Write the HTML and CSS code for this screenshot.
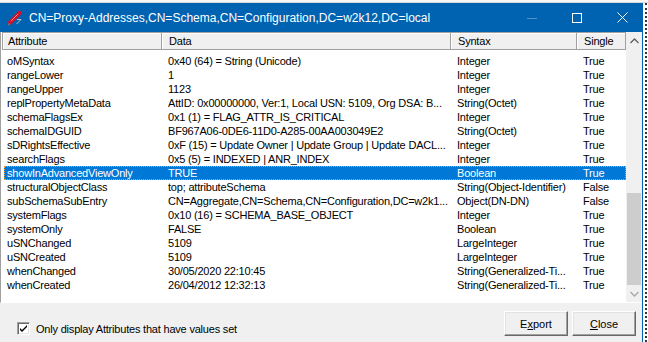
FILE: index.html
```html
<!DOCTYPE html>
<html lang="en">
<head>
  <meta charset="UTF-8">
  <title>Proxy-Addresses</title>
  <link rel="stylesheet" href="styles.css">
</head>
<body>
  <div class="bg-top"></div>
  <div class="screen">
    <div class="window">
      <!-- Title bar -->
      <div class="titlebar">
        <svg class="app-icon" width="16" height="16" viewBox="0 0 16 16">
          <path d="M3 12.5 L12.5 3" stroke="#d0142c" stroke-width="4.2" stroke-linecap="round"/>
          <path d="M4 11 L11 4" stroke="#ff8a8a" stroke-width="1"/>
          <path d="M1 15 L3 13.5" stroke="#777" stroke-width="1.4"/>
          <path d="M10 9.5 L14 9.5 L9.5 14" fill="none" stroke="#c0c0c0" stroke-width="1"/>
        </svg>
        <span class="title">CN=Proxy-Addresses,CN=Schema,CN=Configuration,DC=w2k12,DC=local</span>
        <div class="caption">
          <svg class="cap-icon" width="10" height="10" viewBox="0 0 10 10"><path d="M0 5.5 H10" stroke="#5a93cc" stroke-width="1"/></svg>
          <svg class="cap-icon" width="10" height="10" viewBox="0 0 10 10"><rect x="0.5" y="0.5" width="9" height="9" fill="none" stroke="#fff" stroke-width="1"/></svg>
          <svg class="cap-icon" width="11" height="11" viewBox="0 0 11 11"><path d="M0.5 0.5 L10.5 10.5 M10.5 0.5 L0.5 10.5" stroke="#fff" stroke-width="1"/></svg>
        </div>
      </div>

      <!-- Attribute list -->
      <div class="list">
        <div class="list-main">
          <div class="list-head">
            <div class="hcell first">Attribute</div>
            <div class="hcell">Data</div>
            <div class="hcell">Syntax</div>
            <div class="hcell">Single</div>
          </div>
          <div class="rows">
            <div class="row"><span>oMSyntax</span><span>0x40 (64) = String (Unicode)</span><span>Integer</span><span>True</span></div>
            <div class="row"><span>rangeLower</span><span>1</span><span>Integer</span><span>True</span></div>
            <div class="row"><span>rangeUpper</span><span>1123</span><span>Integer</span><span>True</span></div>
            <div class="row"><span>replPropertyMetaData</span><span>AttID: 0x00000000, Ver:1, Local USN: 5109, Org DSA: B...</span><span>String(Octet)</span><span>True</span></div>
            <div class="row"><span>schemaFlagsEx</span><span>0x1 (1) = FLAG_ATTR_IS_CRITICAL</span><span>Integer</span><span>True</span></div>
            <div class="row"><span>schemaIDGUID</span><span>BF967A06-0DE6-11D0-A285-00AA003049E2</span><span>String(Octet)</span><span>True</span></div>
            <div class="row"><span>sDRightsEffective</span><span>0xF (15) = Update Owner | Update Group | Update DACL...</span><span>Integer</span><span>True</span></div>
            <div class="row"><span>searchFlags</span><span>0x5 (5) = INDEXED | ANR_INDEX</span><span>Integer</span><span>True</span></div>
            <div class="row selected"><span>showInAdvancedViewOnly</span><span>TRUE</span><span>Boolean</span><span>True</span></div>
            <div class="row"><span>structuralObjectClass</span><span>top; attributeSchema</span><span>String(Object-Identifier)</span><span>False</span></div>
            <div class="row"><span>subSchemaSubEntry</span><span>CN=Aggregate,CN=Schema,CN=Configuration,DC=w2k1...</span><span>Object(DN-DN)</span><span>False</span></div>
            <div class="row"><span>systemFlags</span><span>0x10 (16) = SCHEMA_BASE_OBJECT</span><span>Integer</span><span>True</span></div>
            <div class="row"><span>systemOnly</span><span>FALSE</span><span>Boolean</span><span>True</span></div>
            <div class="row"><span>uSNChanged</span><span>5109</span><span>LargeInteger</span><span>True</span></div>
            <div class="row"><span>uSNCreated</span><span>5109</span><span>LargeInteger</span><span>True</span></div>
            <div class="row"><span>whenChanged</span><span>30/05/2020 22:10:45</span><span>String(Generalized-Ti...</span><span>True</span></div>
            <div class="row"><span>whenCreated</span><span>26/04/2012 12:32:13</span><span>String(Generalized-Ti...</span><span>True</span></div>
          </div>
        </div>
        <div class="vscroll">
          <div class="arrow">
            <svg width="9" height="6" viewBox="0 0 9 6"><path d="M0.5 5 L4.5 1 L8.5 5" fill="none" stroke="#606060" stroke-width="1.3"/></svg>
          </div>
          <div class="track"><div class="thumb"></div></div>
          <div class="arrow">
            <svg width="9" height="6" viewBox="0 0 9 6"><path d="M0.5 1 L4.5 5 L8.5 1" fill="none" stroke="#a8a8a8" stroke-width="1.3"/></svg>
          </div>
        </div>
      </div>

      <!-- Bottom bar -->
      <div class="footer">
        <label class="check">
          <span class="box">
            <svg width="7" height="7" viewBox="0 0 7 7"><path d="M0 3 L0 5 L2 7 L7 2 L7 0 L2 5 Z" fill="#000"/></svg>
          </span>
          Only display Attributes that have values set
        </label>
        <div class="buttons">
          <button class="btn">E<u>x</u>port</button>
          <button class="btn"><u>C</u>lose</button>
        </div>
      </div>
    </div>
    <div class="edge"></div>
  </div>
</body>
</html>
```

FILE: styles.css
```css
/* Reset */
* {
  margin: 0;
  padding: 0;
  box-sizing: border-box;
}

body {
  width: 648px;
  height: 342px;
  overflow: hidden;
  background: #fff;
  font-family: "Liberation Sans", Arial, sans-serif;
  font-size: 11px;
  letter-spacing: -0.2px;
  color: #000;
}

/* Strip of the window behind */
.bg-top {
  height: 3px;
  background: #f7f7f7;
  border-bottom: 1px solid #d8d8d8;
}

.screen {
  display: flex;
  height: 339px;
}

.window {
  width: 643px;
  display: flex;
  flex-direction: column;
  background: #f0f0f0;
  border-right: 1px solid #0063b1;
}

.edge {
  flex: 1;
  border-right: 2px dotted #333;
  margin-right: 1px;
}

/* Title bar */
.titlebar {
  height: 29px;
  background: #0063b1;
  display: flex;
  align-items: center;
  color: #fff;
  padding-left: 7px;
}

.app-icon {
  margin-right: 6px;
}

.title {
  font-size: 12px;
  letter-spacing: 0;
}

.caption {
  margin-left: auto;
  display: flex;
  align-items: center;
  gap: 35px;
  padding-right: 14px;
}

/* List view */
.list {
  height: 271px;
  display: flex;
  background: #fff;
  border-left: 1px solid #a0a0a0;
  border-bottom: 1px solid #fff;
}

.list-main {
  width: 625px;
  padding-left: 1px;
}

.list-head {
  display: grid;
  grid-template-columns: 160px 289px 126px 49px;
  height: 18px;
}

.hcell {
  border: 1px solid #a0a0a0;
  border-left: none;
  box-shadow: inset 1px 1px #fff;
  background: #f0f0f0;
  padding-left: 7px;
  line-height: 16px;
}

.hcell.first {
  border-left: 1px solid #a0a0a0;
  padding-left: 5px;
}

.rows {
  padding-top: 4px;
  padding-left: 2px;
}

.row {
  display: grid;
  grid-template-columns: 158px 289px 126px 49px;
  height: 14px;
  line-height: 14px;
  white-space: nowrap;
}

.row span {
  padding-left: 6px;
  overflow: hidden;
}

.row span:first-child {
  padding-left: 3px;
}

.row.selected {
  background: #0078d7;
  color: #fff;
  outline: 1px dotted #f39a3a;
  outline-offset: -1px;
}

/* Vertical scrollbar */
.vscroll {
  width: 17px;
  background: #f0f0f0;
  display: flex;
  flex-direction: column;
}

.arrow {
  height: 17px;
  display: flex;
  align-items: center;
  justify-content: center;
}

.track {
  flex: 1;
  position: relative;
}

.thumb {
  position: absolute;
  left: 1px;
  right: 1px;
  top: 144px;
  bottom: 0;
  background: #cdcdcd;
}

/* Footer */
.footer {
  flex: 1;
  display: flex;
  align-items: flex-start;
  padding: 0 6px 0 17px;
}

.check {
  margin-top: 19px;
  display: flex;
  align-items: center;
  gap: 6px;
}

.box {
  width: 13px;
  height: 13px;
  background: #fff;
  border: 1px solid;
  border-color: #a0a0a0 #fff #fff #a0a0a0;
  box-shadow: inset 1px 1px #696969, inset -1px -1px #e3e3e3;
  display: flex;
  align-items: center;
  justify-content: center;
}

.buttons {
  margin-left: auto;
  margin-top: 8px;
  display: flex;
  gap: 4px;
}

.btn {
  width: 64px;
  height: 25px;
  background: #f0f0f0;
  font-family: "Liberation Sans", Arial, sans-serif;
  font-size: 11px;
  color: #000;
  border: 1px solid;
  border-color: #fff #696969 #696969 #fff;
  box-shadow: inset -1px -1px #a0a0a0, inset 1px 1px #e3e3e3;
}
```
